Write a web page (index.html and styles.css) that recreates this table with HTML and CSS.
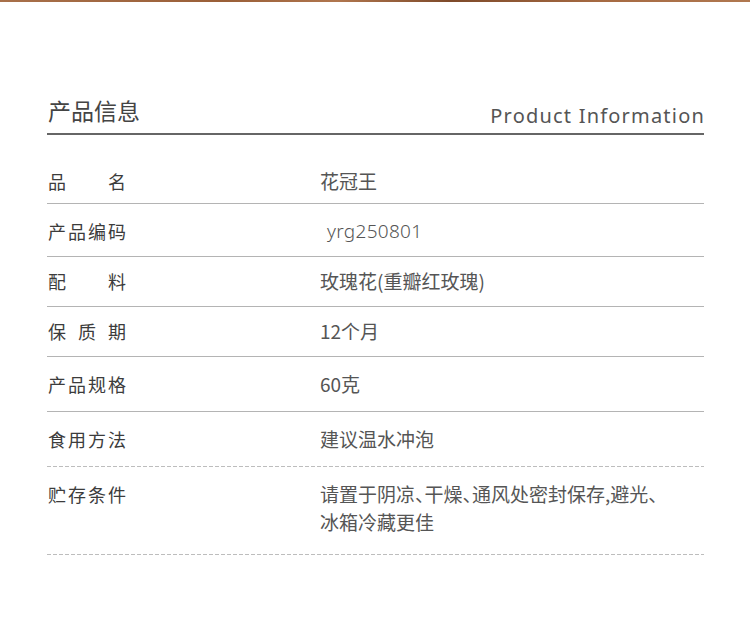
FILE: index.html
```html
<!DOCTYPE html>
<html lang="zh-CN">
<head>
<meta charset="utf-8">
<title>产品信息</title>
<link rel="stylesheet" href="styles.css">
</head>
<body>
<div class="topbar"></div>
<main class="info">
  <header class="info-head">
    <h1 class="title">产品信息</h1>
    <div class="subtitle">Product Information</div>
  </header>
  <div class="row row-first">
    <div class="label">品名</div>
    <div class="value">花冠王</div>
  </div>
  <div class="row row-code">
    <div class="label">产品编码</div>
    <div class="value code">yrg250801</div>
  </div>
  <div class="row">
    <div class="label">配料</div>
    <div class="value">玫瑰花(重瓣红玫瑰)</div>
  </div>
  <div class="row">
    <div class="label">保质期</div>
    <div class="value">12个月</div>
  </div>
  <div class="row row-tall">
    <div class="label">产品规格</div>
    <div class="value">60克</div>
  </div>
  <div class="row row-tall row-dashed">
    <div class="label">食用方法</div>
    <div class="value">建议温水冲泡</div>
  </div>
  <div class="row row-dashed row-multi">
    <div class="label">贮存条件</div>
    <div class="value">请置于阴凉、干燥、通风处密封保存,避光、<br>冰箱冷藏更佳</div>
  </div>
</main>
</body>
</html>
```
FILE: styles.css
```css
html, body {
  margin: 0;
  padding: 0;
  background: #ffffff;
}
body {
  font-family: "Noto Sans CJK SC", "Noto Sans", sans-serif;
  color: #444;
}
.topbar {
  height: 2px;
  background: linear-gradient(to right, #a8704a, #9a5f38 30%, #b0764e 45%, #7e4a2a 60%, #a66a42 80%, #b07850);
}
.info {
  width: 657px;
  margin: 0 0 0 47px;
  padding-top: 90px;
}
.info-head {
  display: flex;
  justify-content: space-between;
  align-items: flex-end;
  border-bottom: 2px solid #666;
  padding: 0 0 5px 1px;
}
.title {
  margin: 0;
  font-size: 23px;
  font-weight: 400;
  line-height: 36px;
  color: #444;
}
.subtitle {
  font-family: "Noto Sans", "Open Sans", sans-serif;
  font-size: 20px;
  letter-spacing: 1.2px;
  line-height: 30px;
  color: #555;
  margin-right: -1px;
  margin-bottom: -3px;
}
.row {
  display: flex;
  align-items: flex-start;
  padding: 11px 0 12px 1px;
  border-bottom: 1px solid #b4b4b4;
  font-size: 18px;
  line-height: 26px;
}
.row-first {
  padding-top: 33px;
  padding-bottom: 9px;
}
.row-code {
  padding-top: 14px;
}
.row-tall {
  padding-top: 14px;
  padding-bottom: 14px;
}
.row-dashed {
  border-bottom: none;
  padding-bottom: 15px;
  background-image: linear-gradient(to right, #bdbdbd 4px, transparent 4px);
  background-size: 6px 1px;
  background-repeat: repeat-x;
  background-position: left bottom;
}
.row-multi {
  padding-top: 13px;
  padding-bottom: 19px;
  line-height: 28px;
}
.label {
  width: 78px;
  flex: none;
  text-align: justify;
  text-align-last: justify;
  color: #3c3c3c;
}
.value {
  margin-left: 194px;
  font-size: 19px;
  color: #555;
  font-feature-settings: "halt" 1;
}
.code {
  padding-left: 7px;
  font-family: "Noto Sans", "Noto Sans CJK SC", sans-serif;
  font-weight: 300;
  letter-spacing: 0.3px;
}
```
